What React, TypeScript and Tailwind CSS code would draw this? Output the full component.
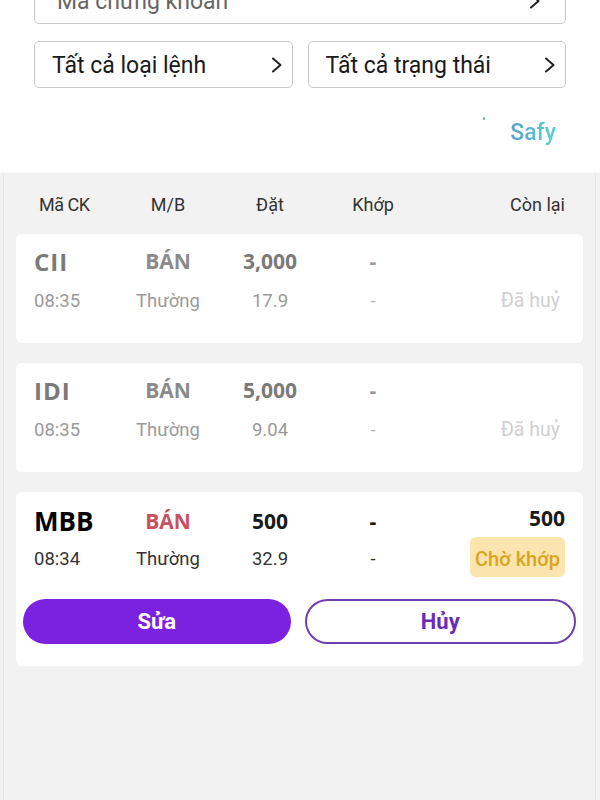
type Order = {
    code: string;
    side: string;
    qty: string;
    time: string;
    type: string;
    price: string;
    remain?: string;
    status: string;
    active?: boolean;
};

const orders: Order[] = [
    { code: "CII", side: "BÁN", qty: "3,000", time: "08:35", type: "Thường", price: "17.9", status: "Đã huỷ" },
    { code: "IDI", side: "BÁN", qty: "5,000", time: "08:35", type: "Thường", price: "9.04", status: "Đã huỷ" },
    { code: "MBB", side: "BÁN", qty: "500", time: "08:34", type: "Thường", price: "32.9", remain: "500", status: "Chờ khớp", active: true },
];

const cols = "grid grid-cols-[84px_100px_104px_102px_1fr] items-center";

function Chevron() {
    return (
        <svg width="12" height="16" viewBox="0 0 12 16" fill="none" stroke="#222" strokeWidth="2" strokeLinecap="round" strokeLinejoin="round">
            <polyline points="2,1.5 9.5,8 2,14.5" />
        </svg>
    );
}

function Select({ label, className = "", textClass = "text-[#1a1a1a]" }: { label: string; className?: string; textClass?: string }) {
    return (
        <div className={`h-[47px] flex items-center justify-between pl-[17px] pr-[9px] border border-[#c9c9c9] rounded-[5px] bg-white ${className}`}>
            <span className={`text-[23px] pt-[4px] ${textClass}`}>{label}</span>
            <Chevron />
        </div>
    );
}

function OrderCard({ o }: { o: Order }) {
    const dim = !o.active;
    return (
        <div className={`bg-white rounded-[6px] pt-[10px] ${o.active ? "pb-[22px]" : "pb-[24px]"}`}>
            <div className={`${cols} h-[29px] px-[18px] font-['Open_Sans',sans-serif] font-bold`}>
                <span className={dim ? "text-[24px] tracking-[1px] text-[#7a7a7a]" : "text-[26px] text-black"}>{o.code}</span>
                <span className={`text-center text-[21px] ${dim ? "text-[#8a8a8a]" : "text-[#c8505f]"}`}>{o.side}</span>
                <span className={`text-center text-[21px] ${dim ? "text-[#7a7a7a]" : "text-[#1a1a1a]"}`}>{o.qty}</span>
                <span className={`text-center text-[21px] ${dim ? "text-[#9a9a9a]" : "text-[#1a1a1a]"}`}>-</span>
                <span className="text-right text-[21px] text-[#1a1a1a] -mt-[5px]">{o.remain}</span>
            </div>
            <div className={`${cols} h-[40px] mt-[6px] px-[18px] text-[18.5px]`}>
                <span className={`pt-[5px] ${dim ? "text-[#9a9a9a]" : "text-[#333]"}`}>{o.time}</span>
                <span className={`pt-[5px] text-center ${dim ? "text-[#9a9a9a]" : "text-[#333]"}`}>{o.type}</span>
                <span className={`pt-[5px] text-center ${dim ? "text-[#9a9a9a]" : "text-[#333]"}`}>{o.price}</span>
                <span className={`pt-[5px] text-center ${dim ? "text-[#b5b5b5]" : "text-[#333]"}`}>-</span>
                <div className="flex justify-end">
                    <span
                        className={`h-[40px] px-[5px] pt-[4px] flex items-center rounded-[6px] ${
                            o.active ? "bg-[#fbe4ad] text-[#d9a521] text-[20px] font-medium" : "text-[#d0d0d0] text-[19.5px]"
                        }`}
                    >
                        {o.status}
                    </span>
                </div>
            </div>
            {o.active && (
                <div className="flex gap-[14px] px-[7px] mt-[22px]">
                    <button className="flex-1 h-[45px] rounded-full bg-[#7b22e0] text-white text-[22px] font-bold">Sửa</button>
                    <button className="flex-1 h-[45px] rounded-full border-2 border-[#6e3fae] bg-white text-[#6a2cb8] text-[22px] font-bold">
                        Hủy
                    </button>
                </div>
            )}
        </div>
    );
}

export default function App() {
    return (
        <div className="w-[600px] h-[800px] overflow-hidden bg-white font-['Roboto',sans-serif]">
            <div className="px-[34px] -mt-[23px]">
                <Select label="Mã chứng khoán" className="pl-[22px] pr-[24px]" textClass="text-[#666]" />
                <div className="flex gap-[15px] mt-[17px]">
                    <Select label="Tất cả loại lệnh" className="flex-1" />
                    <Select label="Tất cả trạng thái" className="flex-1" />
                </div>
                <div className="h-[85px] flex items-center justify-end pr-[10px] pt-[6px]">
                    <span className="w-[2px] h-[3px] rounded-full bg-[#6aaab8] mr-[25px] -mt-[30px]" />
                    <span className="text-[23px] font-medium bg-gradient-to-r from-[#5a9ec8] to-[#5ad2d2] bg-clip-text text-transparent">
                        Safy
                    </span>
                </div>
            </div>
            <div className="h-[640px] bg-[#f2f2f2] pl-[3px] pr-[4px]">
                <div className="h-full border-x border-[#e6e6e6] pl-[12px] pr-[12px] pt-[18px]">
                    <div className={`${cols} h-[24px] px-[18px] text-[18px] text-[#333]`}>
                        <span className="pl-[5px] tracking-[-0.5px]">Mã CK</span>
                        <span className="text-center">M/B</span>
                        <span className="text-center">Đặt</span>
                        <span className="text-center">Khớp</span>
                        <span className="text-right">Còn lại</span>
                    </div>
                    <div className="flex flex-col gap-[20px] mt-[19px]">
                        {orders.map((o) => (
                            <OrderCard key={o.code} o={o} />
                        ))}
                    </div>
                </div>
            </div>
        </div>
    );
}
